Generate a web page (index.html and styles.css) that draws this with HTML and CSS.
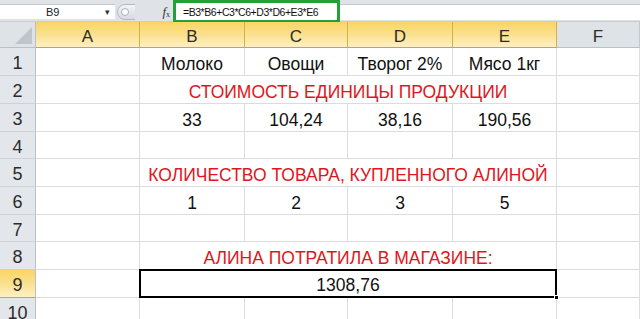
FILE: index.html
```html
<!DOCTYPE html>
<html lang="ru">
<head>
<meta charset="utf-8">
<link rel="stylesheet" href="styles.css">
</head>
<body>
<div class="app">
  <div class="fbar">
    <div class="namebox"><span class="name">B9</span><span class="dd">&#9662;</span></div>
    <div class="split">
      <svg width="18" height="16" viewBox="0 0 18 16">
        <defs><linearGradient id="g" x1="0" y1="0" x2="0" y2="1"><stop offset="0" stop-color="#f4f5f7"/><stop offset="1" stop-color="#d6dadf"/></linearGradient></defs>
        <path d="M18 0.5 H8 A7.5 7.5 0 0 0 8 15.5 H18" fill="url(#g)" stroke="#b3b9c1"/>
        <circle cx="8" cy="8" r="3.5" fill="#fff" stroke="#aab1ba"/>
      </svg>
    </div>
    <div class="fxarea"><span class="fx"><i>f</i><sub>x</sub></span></div>
    <div class="formula"><span>=B3*B6+C3*C6+D3*D6+E3*E6</span></div>
    <div class="rest"></div>
  </div>

  <div class="sheet">
    <div class="corner"><span class="tri"></span></div>
    <div class="ch sel">A</div>
    <div class="ch sel">B</div>
    <div class="ch sel">C</div>
    <div class="ch sel">D</div>
    <div class="ch sel">E</div>
    <div class="ch">F</div>

    <div class="rh">1</div>
    <div class="c"></div>
    <div class="c">Молоко</div>
    <div class="c">Овощи</div>
    <div class="c">Творог 2%</div>
    <div class="c">Мясо 1кг</div>
    <div class="c"></div>

    <div class="rh">2</div>
    <div class="c"></div>
    <div class="c m red">СТОИМОСТЬ ЕДИНИЦЫ ПРОДУКЦИИ</div>
    <div class="c"></div>

    <div class="rh">3</div>
    <div class="c"></div>
    <div class="c">33</div>
    <div class="c">104,24</div>
    <div class="c">38,16</div>
    <div class="c">190,56</div>
    <div class="c"></div>

    <div class="rh">4</div>
    <div class="c"></div>
    <div class="c"></div>
    <div class="c"></div>
    <div class="c"></div>
    <div class="c"></div>
    <div class="c"></div>

    <div class="rh">5</div>
    <div class="c"></div>
    <div class="c m red">КОЛИЧЕСТВО ТОВАРА, КУПЛЕННОГО АЛИНОЙ</div>
    <div class="c"></div>

    <div class="rh">6</div>
    <div class="c"></div>
    <div class="c">1</div>
    <div class="c">2</div>
    <div class="c">3</div>
    <div class="c">5</div>
    <div class="c"></div>

    <div class="rh">7</div>
    <div class="c"></div>
    <div class="c"></div>
    <div class="c"></div>
    <div class="c"></div>
    <div class="c"></div>
    <div class="c"></div>

    <div class="rh">8</div>
    <div class="c"></div>
    <div class="c m red">АЛИНА ПОТРАТИЛА В МАГАЗИНЕ:</div>
    <div class="c"></div>

    <div class="rh sel">9</div>
    <div class="c"></div>
    <div class="c m active">1308,76<span class="handle"></span></div>
    <div class="c"></div>

    <div class="rh">10</div>
    <div class="c"></div>
    <div class="c"></div>
    <div class="c"></div>
    <div class="c"></div>
    <div class="c"></div>
    <div class="c"></div>
  </div>
</div>
</body>
</html>
```

FILE: styles.css
```css
* { box-sizing: border-box; }
html, body { margin: 0; padding: 0; }
body {
  width: 640px;
  height: 319px;
  overflow: hidden;
  background: #fff;
  font-family: "Liberation Sans", Arial, sans-serif;
}
.app { width: 640px; }

/* formula bar */
.fbar {
  display: flex;
  height: 22px;
  background: #dfe3e8;
  border-bottom: 1px solid #c9ced5;
}
.namebox {
  width: 115px;
  margin: 4px 0 2px 0;
  background: #fff;
  border-top: 1px solid #c3c8cf;
  display: flex;
  align-items: center;
  position: relative;
}
.name {
  margin-left: 46px;
  font-size: 11px;
  color: #222;
}
.dd {
  margin-left: auto;
  margin-right: 5px;
  font-size: 9px;
  color: #333;
}
.split {
  width: 22px;
  display: flex;
  align-items: center;
  padding-left: 2px;
  padding-top: 3px;
}
.fxarea {
  width: 36px;
  display: flex;
  align-items: center;
  justify-content: flex-end;
  padding-right: 3px;
  padding-top: 3px;
}
.fx {
  font-family: "Liberation Serif", serif;
  font-size: 13px;
  color: #333;
}
.fx sub { font-size: 8px; vertical-align: -1px; }
.formula {
  width: 167px;
  height: 23px;
  border: 3px solid #22a03a;
  background: #fff;
  display: flex;
  align-items: center;
  padding-left: 7px;
  overflow: hidden;
}
.formula span {
  font-size: 10.5px;
  color: #111;
  letter-spacing: -0.45px;
  white-space: nowrap;
}
.rest {
  flex: 1;
  margin-top: 4px;
  margin-bottom: 1px;
  background: #fff;
  border-top: 1px solid #c3c8cf;
}

/* sheet grid */
.sheet {
  display: grid;
  grid-template-columns: 36px 104px 105px 103px 105px 104px 83px;
  grid-template-rows: 26px 28px 28px 28px 27px 28px 28px 27px 28px 28px 28px;
}
.corner {
  background: #dfe3e8;
  border-right: 1px solid #b8c0ca;
  border-bottom: 1px solid #b8c0ca;
  position: relative;
}
.tri {
  position: absolute;
  right: 3px;
  bottom: 3px;
  width: 0;
  height: 0;
  border-left: 17px solid transparent;
  border-bottom: 17px solid #c0c5cb;
}
.ch {
  background: #dfe3e8;
  border-right: 1px solid #c2c8cf;
  border-bottom: 1px solid #b8c0ca;
  display: flex;
  align-items: center;
  justify-content: center;
  font-size: 17px;
  color: #2b2b2b;
  padding-top: 4px;
}
.ch.sel {
  background: linear-gradient(#f9d564, #fbe293 55%, #fdf0c6);
  border-right: 1px solid #d2b04f;
  border-bottom: 1px solid #c9a541;
}
.rh {
  background: #e3e7ec;
  border-right: 1px solid #b8c0ca;
  border-bottom: 1px solid #cdd2d8;
  display: flex;
  align-items: center;
  justify-content: center;
  font-size: 18px;
  color: #2b2b2b;
  padding-top: 4px;
}
.rh.sel {
  background: linear-gradient(#f9d564, #fbe293 55%, #fdf0c6);
  border-bottom: 1px solid #c9a541;
}
.c {
  border-right: 1px solid #dadcdf;
  border-bottom: 1px solid #dadcdf;
  display: flex;
  align-items: center;
  justify-content: center;
  font-size: 17.5px;
  color: #111;
  padding-top: 5px;
  white-space: nowrap;
}
.c.m { grid-column: span 4; }
.c.red { color: #e0161c; }
.c.active {
  position: relative;
  border: 2px solid #000;
  margin: -1px 0 0 -1px;
  padding-top: 4px;
}
.handle {
  position: absolute;
  right: -4px;
  bottom: -4px;
  width: 5px;
  height: 5px;
  background: #000;
  border: 1px solid #fff;
}
```
